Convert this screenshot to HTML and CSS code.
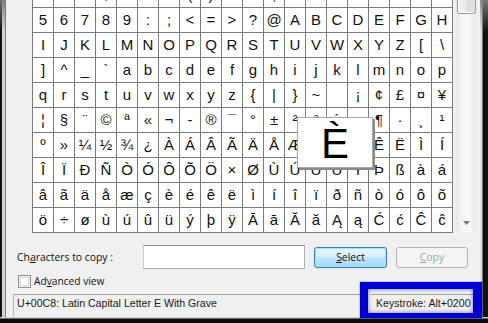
FILE: index.html
```html
<!DOCTYPE html>
<html>
<head>
<meta charset="utf-8">
<link rel="stylesheet" href="styles.css">
</head>
<body>
<div class="win">
  <div class="frame-l"></div>
  <div class="client">
    <div class="charsec">
      <div class="viewport">
        <div class="grid">
          <span>!</span><span>&quot;</span><span>#</span><span>$</span><span>%</span><span>&amp;</span><span>'</span><span>(</span><span>)</span><span>*</span><span>+</span><span>,</span><span>-</span><span>.</span><span>/</span><span>0</span><span>1</span><span>2</span><span>3</span><span>4</span>
          <span>5</span><span>6</span><span>7</span><span>8</span><span>9</span><span>:</span><span>;</span><span>&lt;</span><span>=</span><span>&gt;</span><span>?</span><span>@</span><span>A</span><span>B</span><span>C</span><span>D</span><span>E</span><span>F</span><span>G</span><span>H</span>
          <span>I</span><span>J</span><span>K</span><span>L</span><span>M</span><span>N</span><span>O</span><span>P</span><span>Q</span><span>R</span><span>S</span><span>T</span><span>U</span><span>V</span><span>W</span><span>X</span><span>Y</span><span>Z</span><span>[</span><span>\</span>
          <span>]</span><span>^</span><span>_</span><span>`</span><span>a</span><span>b</span><span>c</span><span>d</span><span>e</span><span>f</span><span>g</span><span>h</span><span>i</span><span>j</span><span>k</span><span>l</span><span>m</span><span>n</span><span>o</span><span>p</span>
          <span>q</span><span>r</span><span>s</span><span>t</span><span>u</span><span>v</span><span>w</span><span>x</span><span>y</span><span>z</span><span>{</span><span>|</span><span>}</span><span>~</span><span>&nbsp;</span><span>¡</span><span>¢</span><span>£</span><span>¤</span><span>¥</span>
          <span>¦</span><span>§</span><span>¨</span><span>©</span><span>ª</span><span>«</span><span>¬</span><span>-</span><span>®</span><span>¯</span><span>°</span><span>±</span><span>²</span><span>³</span><span>´</span><span>µ</span><span>¶</span><span>·</span><span>¸</span><span>¹</span>
          <span>º</span><span>»</span><span>¼</span><span>½</span><span>¾</span><span>¿</span><span>À</span><span>Á</span><span>Â</span><span>Ã</span><span>Ä</span><span>Å</span><span>Æ</span><span>Ç</span><span>È</span><span>É</span><span>Ê</span><span>Ë</span><span>Ì</span><span>Í</span>
          <span>Î</span><span>Ï</span><span>Ð</span><span>Ñ</span><span>Ò</span><span>Ó</span><span>Ô</span><span>Õ</span><span>Ö</span><span>×</span><span>Ø</span><span>Ù</span><span>Ú</span><span>Û</span><span>Ü</span><span>Ý</span><span>Þ</span><span>ß</span><span>à</span><span>á</span>
          <span>â</span><span>ã</span><span>ä</span><span>å</span><span>æ</span><span>ç</span><span>è</span><span>é</span><span>ê</span><span>ë</span><span>ì</span><span>í</span><span>î</span><span>ï</span><span>ð</span><span>ñ</span><span>ò</span><span>ó</span><span>ô</span><span>õ</span>
          <span>ö</span><span>÷</span><span>ø</span><span>ù</span><span>ú</span><span>û</span><span>ü</span><span>ý</span><span>þ</span><span>ÿ</span><span>Ā</span><span>ā</span><span>Ă</span><span>ă</span><span>Ą</span><span>ą</span><span>Ć</span><span>ć</span><span>Ĉ</span><span>ĉ</span>
        </div>
      </div>
      <div class="scroll">
        <div class="thumb"></div>
        <svg class="arrow" width="7" height="4" viewBox="0 0 7 4"><path d="M0 0h7L3.5 4z" fill="#7a7a7a"/></svg>
      </div>
    </div>

    <div class="copyrow">
      <label class="lbl">Ch<u>a</u>racters to copy :</label>
      <div class="field"></div>
      <button class="btn btn-default"><u>S</u>elect</button>
      <button class="btn btn-disabled"><u>C</u>opy</button>
    </div>

    <div class="checkrow">
      <span class="check"></span>
      <span class="lbl">Ad<u>v</u>anced view</span>
    </div>

    <div class="status">
      <div class="pane pane-main">U+00C8: Latin Capital Letter E With Grave</div>
      <div class="pane pane-key">Keystroke: Alt+0200</div>
    </div>

    <div class="magnifier">È</div>
  </div>
  <div class="frame-r"></div>
</div>
<div class="frame-b"></div>
<div class="highlight"></div>
</body>
</html>
```

FILE: styles.css
```css
html, body {
  margin: 0;
  padding: 0;
}
body {
  width: 488px;
  height: 323px;
  overflow: hidden;
  background: #0b0b0b;
  position: relative;
  font-family: "Open Sans", "Liberation Sans", sans-serif;
}

.win {
  display: flex;
  height: 317px;
}

.frame-l {
  width: 6px;
  background:
    linear-gradient(to bottom, rgba(120,120,120,0.9), rgba(40,40,40,0) 32px),
    linear-gradient(to right, #101010 0 2px, #d6d6d6 2px 5px, #7a7a7a 5px 6px);
}
.frame-r {
  width: 8px;
  background:
    linear-gradient(to bottom, rgba(130,130,130,0.9), rgba(40,40,40,0) 32px),
    linear-gradient(to right, #e4e4e4 0 2px, #6c6c6c 2px 3px, #121212 3px);
}
.frame-b {
  height: 6px;
  background: linear-gradient(#d0d0d0 0 1px, #6a6a6a 1px 2px, #0c0c0c 2px);
}

.client {
  width: 474px;
  background: #f0f0f0;
  display: flex;
  flex-direction: column;
  position: relative;
}

/* character grid */
.charsec {
  display: flex;
  height: 233px;
  padding-left: 26px;
  gap: 3px;
}
.viewport {
  width: 421px;
  height: 233px;
  overflow: hidden;
}
.grid {
  display: grid;
  grid-template-columns: repeat(20, 20px);
  grid-auto-rows: 24px;
  gap: 1px;
  background: #7c7c7c;
  border: 1px solid #7c7c7c;
  margin-top: -18px;
  width: max-content;
}
.grid span {
  background: #fff;
  display: flex;
  align-items: center;
  justify-content: center;
  font-family: "Liberation Sans", Arial, sans-serif;
  font-size: 15px;
  color: #111;
  line-height: 1;
  padding-bottom: 1px;
  box-sizing: border-box;
}

.scroll {
  width: 20px;
  height: 232px;
  display: flex;
  flex-direction: column;
  align-items: center;
  justify-content: space-between;
  background: linear-gradient(to right, #e6e6e6, #f6f6f6 30%, #f6f6f6 70%, #e9e9e9);
  box-sizing: border-box;
  padding-bottom: 7px;
}
.thumb {
  width: 19px;
  height: 14px;
  box-sizing: border-box;
  border: 1px solid #9a9a9a;
  border-top: none;
  border-radius: 0 0 3px 3px;
  background: linear-gradient(to right, #f4f4f4, #e6e6e6 50%, #dadada 51%, #e2e2e2);
  box-shadow: inset 0 -1px 0 #fff, inset 1px 0 0 #fff;
}
.arrow {
  display: block;
}

/* copy row */
.copyrow {
  display: flex;
  align-items: center;
  margin-top: 12px;
  height: 24px;
  padding-left: 11px;
}
.lbl {
  font-size: 10.2px;
  color: #111;
}
.copyrow .lbl {
  width: 126px;
  font-size: 10.4px;
}
.field {
  width: 162px;
  height: 24px;
  box-sizing: border-box;
  background: #fff;
  border: 1px solid #abadb3;
  border-top-color: #8e8f8f;
  border-left-color: #c9cacc;
}
.btn {
  height: 21px;
  box-sizing: border-box;
  border-radius: 3px;
  font-family: "Open Sans", "Liberation Sans", sans-serif;
  font-size: 10.4px;
  padding: 0;
}
.btn-default {
  width: 73px;
  margin-left: 9px;
  border: 1px solid #3c7fb1;
  color: #111;
  background: linear-gradient(#e9f6fd 0%, #d9f0fc 45%, #bee6fd 50%, #a7d9f5 100%);
  box-shadow: inset 0 0 0 1px #9ce3fb, 0 0 1px #7ec4ea;
}
.btn-disabled {
  width: 72px;
  margin-left: 9px;
  border: 1px solid #b5b2b2;
  color: #a3a3a3;
  background: #f4f4f4;
}

/* advanced view */
.checkrow {
  display: flex;
  align-items: center;
  margin-top: 5px;
  height: 14px;
  padding-left: 12px;
  gap: 3px;
}
.check {
  width: 13px;
  height: 13px;
  box-sizing: border-box;
  border: 1px solid #8e8f8f;
  background: #fff;
  box-shadow: inset 0 0 0 1px #f4f4f4, inset 0 0 0 2px #d8d8d8;
}

/* status bar */
.status {
  display: flex;
  margin-top: 6px;
  padding-left: 7px;
  gap: 4px;
  height: 23px;
}
.pane {
  border-top: 1px solid #a0a0a0;
  font-family: "Liberation Sans", Arial, sans-serif;
  font-size: 10.6px;
  line-height: 16px;
  color: #1a1a1a;
  padding-left: 3px;
  white-space: nowrap;
}
.pane-main {
  width: 350px;
  border-left: 1px solid #b8b8b8;
}
.pane-key {
  width: 104px;
  padding-left: 5px;
}

/* magnified character */
.magnifier {
  position: absolute;
  left: 291px;
  top: 117px;
  width: 76px;
  height: 51px;
  box-sizing: border-box;
  background: #fff;
  border: 1px solid #a8a8a8;
  box-shadow: 2px 2px 0 #8a8a8a;
  display: flex;
  align-items: center;
  justify-content: center;
  font-family: "Liberation Sans", Arial, sans-serif;
  font-size: 42px;
  line-height: 1;
  color: #000;
  padding-top: 3px;
}

/* annotation */
.highlight {
  position: absolute;
  left: 360px;
  top: 282px;
  width: 122px;
  height: 36px;
  box-sizing: border-box;
  border-style: solid;
  border-color: #0000d2;
  border-width: 7px 9px 5px 8px;
  box-shadow: inset 0 0 4px rgba(0, 0, 90, 0.55), 0 0 1px #0000d2;
}
```
